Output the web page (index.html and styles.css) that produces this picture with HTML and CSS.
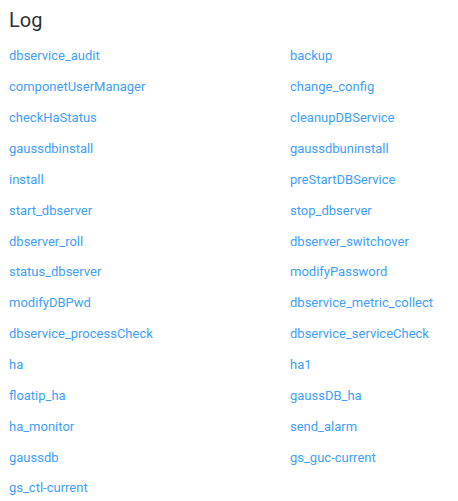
FILE: index.html
```html
<!DOCTYPE html>
<html>
<head>
<meta charset="utf-8">
<link rel="stylesheet" href="styles.css">
</head>
<body>
<div class="page">
  <h2 class="title">Log</h2>
  <div class="links">
    <a class="link" href="#">dbservice_audit</a>
    <a class="link" href="#">backup</a>
    <a class="link" href="#">componetUserManager</a>
    <a class="link" href="#">change_config</a>
    <a class="link" href="#">checkHaStatus</a>
    <a class="link" href="#">cleanupDBService</a>
    <a class="link" href="#">gaussdbinstall</a>
    <a class="link" href="#">gaussdbuninstall</a>
    <a class="link" href="#">install</a>
    <a class="link" href="#">preStartDBService</a>
    <a class="link" href="#">start_dbserver</a>
    <a class="link" href="#">stop_dbserver</a>
    <a class="link" href="#">dbserver_roll</a>
    <a class="link" href="#">dbserver_switchover</a>
    <a class="link" href="#">status_dbserver</a>
    <a class="link" href="#">modifyPassword</a>
    <a class="link" href="#">modifyDBPwd</a>
    <a class="link" href="#">dbservice_metric_collect</a>
    <a class="link" href="#">dbservice_processCheck</a>
    <a class="link" href="#">dbservice_serviceCheck</a>
    <a class="link" href="#">ha</a>
    <a class="link" href="#">ha1</a>
    <a class="link" href="#">floatip_ha</a>
    <a class="link" href="#">gaussDB_ha</a>
    <a class="link" href="#">ha_monitor</a>
    <a class="link" href="#">send_alarm</a>
    <a class="link" href="#">gaussdb</a>
    <a class="link" href="#">gs_guc-current</a>
    <a class="link" href="#">gs_ctl-current</a>
  </div>
</div>
</body>
</html>
```
FILE: styles.css
```css
html, body {
  margin: 0;
  padding: 0;
  background: #ffffff;
}
body {
  font-family: Roboto, "Liberation Sans", sans-serif;
}
.page {
  padding: 6px 9px 0 9px;
}
.title {
  margin: 0;
  font-size: 20px;
  font-weight: 400;
  color: #303133;
  line-height: 28px;
}
.links {
  display: grid;
  grid-template-columns: 281px 1fr;
  grid-auto-rows: 30.86px;
  align-items: center;
  margin-top: 7px;
}
.link {
  font-size: 13px;
  color: #409eff;
  text-decoration: none;
  line-height: 18px;
}
```
